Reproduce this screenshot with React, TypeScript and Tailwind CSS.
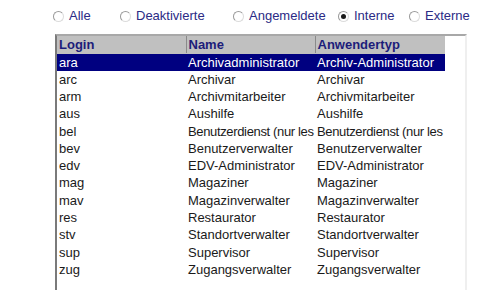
import React from "react";

const rows: [string, string, string][] = [
  ["ara", "Archivadministrator", "Archiv-Administrator"],
  ["arc", "Archivar", "Archivar"],
  ["arm", "Archivmitarbeiter", "Archivmitarbeiter"],
  ["aus", "Aushilfe", "Aushilfe"],
  ["bel", "Benutzerdienst (nur les", "Benutzerdienst (nur les"],
  ["bev", "Benutzerverwalter", "Benutzerverwalter"],
  ["edv", "EDV-Administrator", "EDV-Administrator"],
  ["mag", "Magaziner", "Magaziner"],
  ["mav", "Magazinverwalter", "Magazinverwalter"],
  ["res", "Restaurator", "Restaurator"],
  ["stv", "Standortverwalter", "Standortverwalter"],
  ["sup", "Supervisor", "Supervisor"],
  ["zug", "Zugangsverwalter", "Zugangsverwalter"],
];

const filters = [
  { label: "Alle", width: "w-[67px]" },
  { label: "Deaktivierte", width: "w-[113px]" },
  { label: "Angemeldete", width: "w-[105px]" },
  { label: "Interne", width: "w-[71px]", checked: true },
  { label: "Externe", width: "w-[60px]" },
];

function Radio({ checked }: { checked?: boolean }) {
  return (
    <span className="flex h-[11px] w-[11px] shrink-0 items-center justify-center rounded-full border border-t-[#9a9a9a] border-l-[#9a9a9a] border-r-[#dcdcdc] border-b-[#dcdcdc] bg-white">
      {checked && <span className="h-[5px] w-[5px] rounded-full bg-[#1a1a1a]" />}
    </span>
  );
}

export default function App() {
  return (
    <div className="h-[290px] w-[500px] overflow-hidden bg-white font-['Liberation_Sans',Arial,sans-serif] text-[13px]">
      <div className="flex h-[34px] items-center pb-[2px] pl-[53px]">
        {filters.map((f) => (
          <label key={f.label} className={`${f.width} flex items-center gap-[5px] text-[#2b2b85]`}>
            <Radio checked={f.checked} />
            <span>{f.label}</span>
          </label>
        ))}
      </div>

      <div className="ml-[55px] h-[256px] w-[412px] overflow-hidden border-t-2 border-l-2 border-r-2 border-t-[#a8a8a8] border-l-[#7a7a7a] border-r-[#efefef]">
        <table className="w-[388px] table-fixed border-collapse">
          <colgroup>
            <col className="w-[129px]" />
            <col className="w-[129px]" />
            <col className="w-[130px]" />
          </colgroup>
          <thead>
            <tr className="h-[17px] bg-[#c0c0c0]">
              {["Login", "Name", "Anwendertyp"].map((h, i) => (
                <th
                  key={h}
                  className={`overflow-hidden whitespace-nowrap pl-[2px] text-left font-bold leading-[15px] text-[#1c1c7a] border-b border-b-[#c0c0c0] ${
                    i > 0 ? "border-l border-l-[#8a8a8a]" : ""
                  }`}
                >
                  {h}
                </th>
              ))}
            </tr>
          </thead>
          <tbody>
            {rows.map((r, i) => (
              <tr
                key={r[0]}
                className={`h-[17.3px] ${i === 0 ? "bg-[#000080] text-white" : "text-[#1a1a1a]"}`}
              >
                {r.map((c, j) => (
                  <td
                    key={j}
                    className={`overflow-hidden whitespace-nowrap pl-[2px] leading-[17px] ${
                      c.length > 20 ? "tracking-[-0.35px]" : ""
                    }`}
                  >
                    {c}
                  </td>
                ))}
              </tr>
            ))}
          </tbody>
        </table>
      </div>
    </div>
  );
}
